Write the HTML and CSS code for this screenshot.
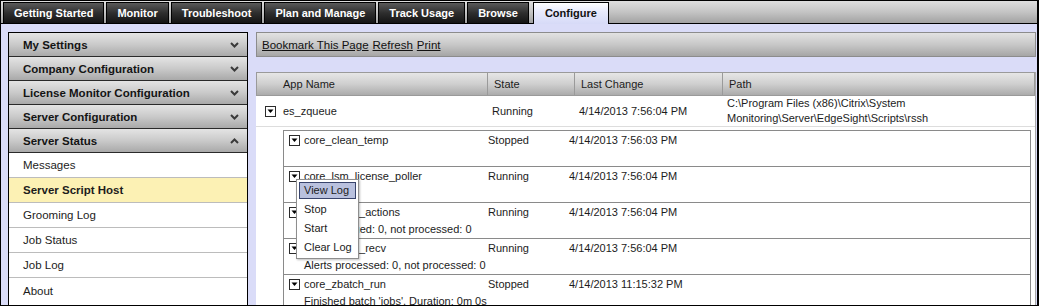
FILE: index.html
```html
<!doctype html>
<html lang="en">
<head>
    <meta charset="UTF-8">
    <title>Configure - Server Script Host</title>
    <link rel="stylesheet" href="styles.css">
</head>
<body>
<div class="page">
    <!--top tabs-->
    <div class="tabs">
        <span class="tab">Getting Started</span>
        <span class="tab">Monitor</span>
        <span class="tab">Troubleshoot</span>
        <span class="tab">Plan and Manage</span>
        <span class="tab">Track Usage</span>
        <span class="tab">Browse</span>
        <span class="tab active">Configure</span>
    </div>

    <div class="main">
        <!--left accordion-->
        <div class="sidebar">
            <div class="acc-head">My Settings
                <svg class="chev" width="9" height="6"><path d="M1 1l3.5 3.5L8 1" fill="none" stroke="#3a3a3a" stroke-width="2"/></svg>
            </div>
            <div class="acc-head">Company Configuration
                <svg class="chev" width="9" height="6"><path d="M1 1l3.5 3.5L8 1" fill="none" stroke="#3a3a3a" stroke-width="2"/></svg>
            </div>
            <div class="acc-head">License Monitor Configuration
                <svg class="chev" width="9" height="6"><path d="M1 1l3.5 3.5L8 1" fill="none" stroke="#3a3a3a" stroke-width="2"/></svg>
            </div>
            <div class="acc-head">Server Configuration
                <svg class="chev" width="9" height="6"><path d="M1 1l3.5 3.5L8 1" fill="none" stroke="#3a3a3a" stroke-width="2"/></svg>
            </div>
            <div class="acc-head">Server Status
                <svg class="chev" width="9" height="6"><path d="M1 5l3.5-3.5L8 5" fill="none" stroke="#3a3a3a" stroke-width="2"/></svg>
            </div>
            <div class="acc-item">Messages</div>
            <div class="acc-item sel">Server Script Host</div>
            <div class="acc-item">Grooming Log</div>
            <div class="acc-item">Job Status</div>
            <div class="acc-item">Job Log</div>
            <div class="acc-item">About</div>
        </div>

        <!--right content-->
        <div class="content">
            <div class="toolbar">
                <a href="#">Bookmark This Page</a>
                <a href="#">Refresh</a>
                <a href="#">Print</a>
            </div>

            <div class="grid">
                <div class="grid-head">
                    <div class="hc first">App Name</div>
                    <div class="hc">State</div>
                    <div class="hc">Last Change</div>
                    <div class="hc">Path</div>
                </div>
                <div class="app-row">
                    <div class="cell first">
                        <svg class="drop" width="11" height="11"><rect x="0.5" y="0.5" width="10" height="10" fill="#fff" stroke="#2b2b2b"/><path d="M2.5 3.5h6l-3 3.5z" fill="#000"/></svg>
                        es_zqueue
                    </div>
                    <div class="cell">Running</div>
                    <div class="cell">4/14/2013 7:56:04 PM</div>
                    <div class="cell path">C:\Program Files (x86)\Citrix\System<br>Monitoring\Server\EdgeSight\Scripts\rssh</div>
                </div>

                <div class="jobs">
                    <div class="job-list">
                        <div class="job">
                            <div class="jc name">
                                <svg class="drop" width="11" height="11"><rect x="0.5" y="0.5" width="10" height="10" fill="#fff" stroke="#2b2b2b"/><path d="M2.5 3.5h6l-3 3.5z" fill="#000"/></svg>
                                core_clean_temp
                            </div>
                            <div class="jc">Stopped</div>
                            <div class="jc">4/14/2013 7:56:03 PM</div>
                        </div>
                        <div class="job">
                            <div class="jc name">
                                <svg class="drop" width="11" height="11"><rect x="0.5" y="0.5" width="10" height="10" fill="#fff" stroke="#2b2b2b"/><path d="M2.5 3.5h6l-3 3.5z" fill="#000"/></svg>
                                core_lsm_license_poller
                            </div>
                            <div class="jc">Running</div>
                            <div class="jc">4/14/2013 7:56:04 PM</div>
                        </div>
                        <div class="job">
                            <div class="jc name">
                                <svg class="drop" width="11" height="11"><rect x="0.5" y="0.5" width="10" height="10" fill="#fff" stroke="#2b2b2b"/><path d="M2.5 3.5h6l-3 3.5z" fill="#000"/></svg>
                                core_alertq_actions
                            </div>
                            <div class="jc">Running</div>
                            <div class="jc">4/14/2013 7:56:04 PM</div>
                            <div class="note">Alerts queued: 0, not processed: 0</div>
                        </div>
                        <div class="job">
                            <div class="jc name">
                                <svg class="drop" width="11" height="11"><rect x="0.5" y="0.5" width="10" height="10" fill="#fff" stroke="#2b2b2b"/><path d="M2.5 3.5h6l-3 3.5z" fill="#000"/></svg>
                                core_alertq_recv
                            </div>
                            <div class="jc">Running</div>
                            <div class="jc">4/14/2013 7:56:04 PM</div>
                            <div class="note">Alerts processed: 0, not processed: 0</div>
                        </div>
                        <div class="job">
                            <div class="jc name">
                                <svg class="drop" width="11" height="11"><rect x="0.5" y="0.5" width="10" height="10" fill="#fff" stroke="#2b2b2b"/><path d="M2.5 3.5h6l-3 3.5z" fill="#000"/></svg>
                                core_zbatch_run
                            </div>
                            <div class="jc">Stopped</div>
                            <div class="jc">4/14/2013 11:15:32 PM</div>
                            <div class="note">Finished batch 'jobs', Duration: 0m 0s</div>
                        </div>
                    </div>
                </div>
            </div>

            <!--context menu over the poller row-->
            <div class="menu">
                <div class="menu-item hot">View Log</div>
                <div class="menu-item">Stop</div>
                <div class="menu-item">Start</div>
                <div class="menu-item">Clear Log</div>
            </div>
        </div>
    </div>
</div>
</body>
</html>
```

FILE: styles.css
```css
* {
    margin: 0;
    padding: 0;
    box-sizing: border-box;
}

body {
    font-family: "Liberation Sans", Arial, sans-serif;
    font-size: 11px;
    color: #1c1c1c;
    background-color: #ffffff;
}

.page {
    width: 1039px;
    height: 306px;
    border: 1px solid #000000;
    border-right-width: 2px;
    background-color: #dadcf8;
    overflow: hidden;
}

/* tabs */
.tabs {
    height: 23px;
    display: flex;
    align-items: flex-end;
    gap: 2px;
    padding-left: 2px;
    border-bottom: 1px solid #000000;
    background: linear-gradient(#dedede, #c4c4c4 50%, #a2a2a2);
}

.tab {
    height: 21px;
    padding: 0 10px;
    line-height: 20px;
    font-weight: bold;
    color: #ffffff;
    border: 1px solid #000000;
    border-bottom: none;
    background: linear-gradient(#5a5a5a, #2e2e2e 50%, #141414);
}

.tab.active {
    height: 22px;
    margin-bottom: -1px;
    margin-left: 2px;
    padding: 0 11px;
    color: #111111;
    background: linear-gradient(#ffffff, #e8eafc 40%, #d6daf7);
}

/* main */
.main {
    display: flex;
    gap: 8px;
    padding: 8px 1px 0 7px;
}

.sidebar {
    width: 240px;
    flex-shrink: 0;
    border: 1px solid #000000;
    background-color: #ffffff;
}

.acc-head {
    height: 24px;
    display: flex;
    align-items: center;
    justify-content: space-between;
    padding: 0 8px 0 14px;
    font-weight: bold;
    font-size: 11.5px;
    color: #141414;
    border-bottom: 1px solid #2a2a2a;
    background: linear-gradient(#e4e4e4, #cacaca 50%, #a9a9a9);
}

.acc-item {
    height: 25px;
    display: flex;
    align-items: center;
    padding-left: 14px;
    font-size: 11.5px;
    border-bottom: 1px solid #bcbcbc;
}

.acc-item.sel {
    font-weight: bold;
    background-color: #fcf1b4;
}

.acc-item:last-child {
    border-bottom: none;
}

.content {
    flex: 1;
    position: relative;
}

.toolbar {
    height: 25px;
    display: flex;
    align-items: center;
    gap: 4px;
    padding-left: 5px;
    border: 1px solid #8c8c8c;
    background: linear-gradient(#e2e2e2, #c8c8c8 50%, #a6a6a6);
}

.toolbar a {
    color: #111111;
    font-size: 11.5px;
}

/* app grid */
.grid {
    margin-top: 15px;
    background-color: #ffffff;
    border-right: 1px solid #a8a8a8;
}

.grid-head,
.app-row {
    display: grid;
    grid-template-columns: 230px 87px 148px 1fr;
}

.grid-head {
    height: 24px;
    border: 1px solid #9a9a9a;
    background: linear-gradient(#e6e6e6, #cfcfcf 50%, #ababab);
}

.hc {
    display: flex;
    align-items: center;
    padding-left: 6px;
    border-left: 1px solid #9a9a9a;
}

.hc.first {
    padding-left: 26px;
    border-left: none;
}

.app-row {
    height: 31px;
    border-bottom: 1px solid #dddddd;
}

.cell {
    display: flex;
    align-items: center;
    padding-left: 6px;
}

.cell.first {
    padding-left: 9px;
    gap: 7px;
}

.cell.path {
    line-height: 15px;
}

.jobs {
    padding: 3px 4px 0 27px;
}

.job-list {
    border: 1px solid #8a8a8a;
    border-bottom: none;
}

.job {
    display: grid;
    grid-template-columns: 204px 81px 1fr;
    height: 36px;
    padding-top: 1px;
    line-height: 17px;
    border-bottom: 1px solid #8a8a8a;
}

.jc {
    display: flex;
    align-items: center;
    height: 17px;
}

.jc.name {
    padding-left: 5px;
    gap: 4px;
}

.note {
    grid-column: 1 / 4;
    padding-left: 20px;
}

.drop {
    flex-shrink: 0;
}

/* context menu */
.menu {
    position: absolute;
    z-index: 10;
    left: 40px;
    top: 147px;
    width: 63px;
    padding: 1px 1px;
    border: 1px solid #8e8e8e;
    background-color: #ffffff;
    box-shadow: 1px 1px 2px rgba(0, 0, 0, .25);
}

.menu-item {
    height: 19px;
    line-height: 19px;
    padding-left: 6px;
}

.menu-item.hot {
    margin: 1px 1px;
    height: 17px;
    line-height: 15px;
    padding-left: 4px;
    border: 1px solid #38446c;
    background-color: #b9c1de;
}
```
